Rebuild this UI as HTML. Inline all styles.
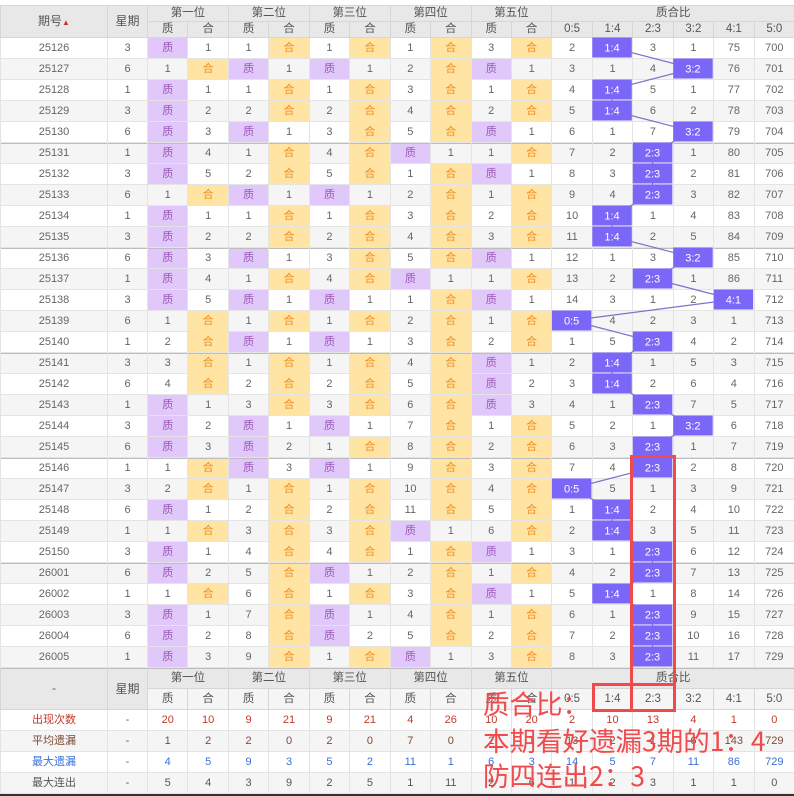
<!DOCTYPE html>
<html><head><meta charset="utf-8">
<style>
body{margin:0;background:#fff;width:794px;height:796px;overflow:hidden;position:relative;font-family:"Liberation Sans","Noto Sans CJK SC",sans-serif;}
table{position:absolute;left:0;top:5px;border-collapse:collapse;table-layout:fixed;width:794px;}
td{padding:0;border:1px solid #e4e4e4;text-align:center;font-size:11px;color:#666;height:20px;line-height:20px;white-space:nowrap;overflow:hidden;}
thead td,.fh td{background:#e8e8e8;color:#555;font-size:11.5px;border-color:#d6d6d6;}
tr.hr1 td{height:15px;line-height:15px;}
tr.hr2 td{height:15px;line-height:15px;}
tr.fr td{height:20px;line-height:20px;}
tbody tr:nth-child(even) td{background:#f5f5f5;}
td.q{background:#e0c8fb!important;color:#9b59b6;}
td.h{background:#ffe4a3!important;color:#f08c1e;}
tr.g td{box-shadow:inset 0 1px 0 #bdbdbd;}
tbody td:nth-child(2),tbody td:nth-child(3),tbody td:nth-child(5),tbody td:nth-child(7),tbody td:nth-child(9),tbody td:nth-child(11),tbody td:nth-child(13){border-left:1px solid #c4c4c4;}
.fh1 td{box-shadow:inset 0 1px 0 #bdbdbd;}
tr.r1 td{color:#c0392b;background:#fff;}
tr.r2 td{color:#7d4a36;background:#f5f5f5;}
tr.r3 td{color:#3a6fd8;background:#fff;}
tr.r4 td{color:#555;background:#f5f5f5;}
.ft td:nth-child(2),.ft td:nth-child(3),.ft td:nth-child(5),.ft td:nth-child(7),.ft td:nth-child(9),.ft td:nth-child(11),.ft td:nth-child(13){border-left:1px solid #c4c4c4;}
.ann{position:absolute;left:483px;color:#f04a4c;font-family:"Noto Sans CJK SC",sans-serif;font-size:26.5px;line-height:30px;white-space:nowrap;}
.rb{position:absolute;border:3px solid #f04a4c;box-sizing:border-box;}
</style></head><body>
<table>
<colgroup><col style="width:107px"><col style="width:40px"><col span="16" style="width:40.4375px"></colgroup>
<thead>
<tr class="hr1"><td rowspan="2" style="font-size:12px">期号<span style="color:#c33;font-size:8px">▲</span></td><td rowspan="2" style="font-size:12px">星期</td><td colspan="2">第一位</td><td colspan="2">第二位</td><td colspan="2">第三位</td><td colspan="2">第四位</td><td colspan="2">第五位</td><td colspan="6">质合比</td></tr>
<tr class="hr2"><td>质</td><td>合</td><td>质</td><td>合</td><td>质</td><td>合</td><td>质</td><td>合</td><td>质</td><td>合</td><td>0:5</td><td>1:4</td><td>2:3</td><td>3:2</td><td>4:1</td><td>5:0</td></tr>
</thead>
<tbody>
<tr><td>25126</td><td>3</td><td class="q">质</td><td>1</td><td>1</td><td class="h">合</td><td>1</td><td class="h">合</td><td>1</td><td class="h">合</td><td>3</td><td class="h">合</td><td>2</td><td></td><td>3</td><td>1</td><td>75</td><td>700</td></tr>
<tr><td>25127</td><td>6</td><td>1</td><td class="h">合</td><td class="q">质</td><td>1</td><td class="q">质</td><td>1</td><td>2</td><td class="h">合</td><td class="q">质</td><td>1</td><td>3</td><td>1</td><td>4</td><td></td><td>76</td><td>701</td></tr>
<tr><td>25128</td><td>1</td><td class="q">质</td><td>1</td><td>1</td><td class="h">合</td><td>1</td><td class="h">合</td><td>3</td><td class="h">合</td><td>1</td><td class="h">合</td><td>4</td><td></td><td>5</td><td>1</td><td>77</td><td>702</td></tr>
<tr><td>25129</td><td>3</td><td class="q">质</td><td>2</td><td>2</td><td class="h">合</td><td>2</td><td class="h">合</td><td>4</td><td class="h">合</td><td>2</td><td class="h">合</td><td>5</td><td></td><td>6</td><td>2</td><td>78</td><td>703</td></tr>
<tr><td>25130</td><td>6</td><td class="q">质</td><td>3</td><td class="q">质</td><td>1</td><td>3</td><td class="h">合</td><td>5</td><td class="h">合</td><td class="q">质</td><td>1</td><td>6</td><td>1</td><td>7</td><td></td><td>79</td><td>704</td></tr>
<tr class="g"><td>25131</td><td>1</td><td class="q">质</td><td>4</td><td>1</td><td class="h">合</td><td>4</td><td class="h">合</td><td class="q">质</td><td>1</td><td>1</td><td class="h">合</td><td>7</td><td>2</td><td></td><td>1</td><td>80</td><td>705</td></tr>
<tr><td>25132</td><td>3</td><td class="q">质</td><td>5</td><td>2</td><td class="h">合</td><td>5</td><td class="h">合</td><td>1</td><td class="h">合</td><td class="q">质</td><td>1</td><td>8</td><td>3</td><td></td><td>2</td><td>81</td><td>706</td></tr>
<tr><td>25133</td><td>6</td><td>1</td><td class="h">合</td><td class="q">质</td><td>1</td><td class="q">质</td><td>1</td><td>2</td><td class="h">合</td><td>1</td><td class="h">合</td><td>9</td><td>4</td><td></td><td>3</td><td>82</td><td>707</td></tr>
<tr><td>25134</td><td>1</td><td class="q">质</td><td>1</td><td>1</td><td class="h">合</td><td>1</td><td class="h">合</td><td>3</td><td class="h">合</td><td>2</td><td class="h">合</td><td>10</td><td></td><td>1</td><td>4</td><td>83</td><td>708</td></tr>
<tr><td>25135</td><td>3</td><td class="q">质</td><td>2</td><td>2</td><td class="h">合</td><td>2</td><td class="h">合</td><td>4</td><td class="h">合</td><td>3</td><td class="h">合</td><td>11</td><td></td><td>2</td><td>5</td><td>84</td><td>709</td></tr>
<tr class="g"><td>25136</td><td>6</td><td class="q">质</td><td>3</td><td class="q">质</td><td>1</td><td>3</td><td class="h">合</td><td>5</td><td class="h">合</td><td class="q">质</td><td>1</td><td>12</td><td>1</td><td>3</td><td></td><td>85</td><td>710</td></tr>
<tr><td>25137</td><td>1</td><td class="q">质</td><td>4</td><td>1</td><td class="h">合</td><td>4</td><td class="h">合</td><td class="q">质</td><td>1</td><td>1</td><td class="h">合</td><td>13</td><td>2</td><td></td><td>1</td><td>86</td><td>711</td></tr>
<tr><td>25138</td><td>3</td><td class="q">质</td><td>5</td><td class="q">质</td><td>1</td><td class="q">质</td><td>1</td><td>1</td><td class="h">合</td><td class="q">质</td><td>1</td><td>14</td><td>3</td><td>1</td><td>2</td><td></td><td>712</td></tr>
<tr><td>25139</td><td>6</td><td>1</td><td class="h">合</td><td>1</td><td class="h">合</td><td>1</td><td class="h">合</td><td>2</td><td class="h">合</td><td>1</td><td class="h">合</td><td></td><td>4</td><td>2</td><td>3</td><td>1</td><td>713</td></tr>
<tr><td>25140</td><td>1</td><td>2</td><td class="h">合</td><td class="q">质</td><td>1</td><td class="q">质</td><td>1</td><td>3</td><td class="h">合</td><td>2</td><td class="h">合</td><td>1</td><td>5</td><td></td><td>4</td><td>2</td><td>714</td></tr>
<tr class="g"><td>25141</td><td>3</td><td>3</td><td class="h">合</td><td>1</td><td class="h">合</td><td>1</td><td class="h">合</td><td>4</td><td class="h">合</td><td class="q">质</td><td>1</td><td>2</td><td></td><td>1</td><td>5</td><td>3</td><td>715</td></tr>
<tr><td>25142</td><td>6</td><td>4</td><td class="h">合</td><td>2</td><td class="h">合</td><td>2</td><td class="h">合</td><td>5</td><td class="h">合</td><td class="q">质</td><td>2</td><td>3</td><td></td><td>2</td><td>6</td><td>4</td><td>716</td></tr>
<tr><td>25143</td><td>1</td><td class="q">质</td><td>1</td><td>3</td><td class="h">合</td><td>3</td><td class="h">合</td><td>6</td><td class="h">合</td><td class="q">质</td><td>3</td><td>4</td><td>1</td><td></td><td>7</td><td>5</td><td>717</td></tr>
<tr><td>25144</td><td>3</td><td class="q">质</td><td>2</td><td class="q">质</td><td>1</td><td class="q">质</td><td>1</td><td>7</td><td class="h">合</td><td>1</td><td class="h">合</td><td>5</td><td>2</td><td>1</td><td></td><td>6</td><td>718</td></tr>
<tr><td>25145</td><td>6</td><td class="q">质</td><td>3</td><td class="q">质</td><td>2</td><td>1</td><td class="h">合</td><td>8</td><td class="h">合</td><td>2</td><td class="h">合</td><td>6</td><td>3</td><td></td><td>1</td><td>7</td><td>719</td></tr>
<tr class="g"><td>25146</td><td>1</td><td>1</td><td class="h">合</td><td class="q">质</td><td>3</td><td class="q">质</td><td>1</td><td>9</td><td class="h">合</td><td>3</td><td class="h">合</td><td>7</td><td>4</td><td></td><td>2</td><td>8</td><td>720</td></tr>
<tr><td>25147</td><td>3</td><td>2</td><td class="h">合</td><td>1</td><td class="h">合</td><td>1</td><td class="h">合</td><td>10</td><td class="h">合</td><td>4</td><td class="h">合</td><td></td><td>5</td><td>1</td><td>3</td><td>9</td><td>721</td></tr>
<tr><td>25148</td><td>6</td><td class="q">质</td><td>1</td><td>2</td><td class="h">合</td><td>2</td><td class="h">合</td><td>11</td><td class="h">合</td><td>5</td><td class="h">合</td><td>1</td><td></td><td>2</td><td>4</td><td>10</td><td>722</td></tr>
<tr><td>25149</td><td>1</td><td>1</td><td class="h">合</td><td>3</td><td class="h">合</td><td>3</td><td class="h">合</td><td class="q">质</td><td>1</td><td>6</td><td class="h">合</td><td>2</td><td></td><td>3</td><td>5</td><td>11</td><td>723</td></tr>
<tr><td>25150</td><td>3</td><td class="q">质</td><td>1</td><td>4</td><td class="h">合</td><td>4</td><td class="h">合</td><td>1</td><td class="h">合</td><td class="q">质</td><td>1</td><td>3</td><td>1</td><td></td><td>6</td><td>12</td><td>724</td></tr>
<tr class="g"><td>26001</td><td>6</td><td class="q">质</td><td>2</td><td>5</td><td class="h">合</td><td class="q">质</td><td>1</td><td>2</td><td class="h">合</td><td>1</td><td class="h">合</td><td>4</td><td>2</td><td></td><td>7</td><td>13</td><td>725</td></tr>
<tr><td>26002</td><td>1</td><td>1</td><td class="h">合</td><td>6</td><td class="h">合</td><td>1</td><td class="h">合</td><td>3</td><td class="h">合</td><td class="q">质</td><td>1</td><td>5</td><td></td><td>1</td><td>8</td><td>14</td><td>726</td></tr>
<tr><td>26003</td><td>3</td><td class="q">质</td><td>1</td><td>7</td><td class="h">合</td><td class="q">质</td><td>1</td><td>4</td><td class="h">合</td><td>1</td><td class="h">合</td><td>6</td><td>1</td><td></td><td>9</td><td>15</td><td>727</td></tr>
<tr><td>26004</td><td>6</td><td class="q">质</td><td>2</td><td>8</td><td class="h">合</td><td class="q">质</td><td>2</td><td>5</td><td class="h">合</td><td>2</td><td class="h">合</td><td>7</td><td>2</td><td></td><td>10</td><td>16</td><td>728</td></tr>
<tr><td>26005</td><td>1</td><td class="q">质</td><td>3</td><td>9</td><td class="h">合</td><td>1</td><td class="h">合</td><td class="q">质</td><td>1</td><td>3</td><td class="h">合</td><td>8</td><td>3</td><td></td><td>11</td><td>17</td><td>729</td></tr>
</tbody>
<tbody class="ft">
<tr class="fh fh1 fr"><td rowspan="2">-</td><td rowspan="2" style="font-size:12px">星期</td><td colspan="2">第一位</td><td colspan="2">第二位</td><td colspan="2">第三位</td><td colspan="2">第四位</td><td colspan="2">第五位</td><td colspan="6">质合比</td></tr>
<tr class="fh fr"><td>质</td><td>合</td><td>质</td><td>合</td><td>质</td><td>合</td><td>质</td><td>合</td><td>质</td><td>合</td><td>0:5</td><td>1:4</td><td>2:3</td><td>3:2</td><td>4:1</td><td>5:0</td></tr>
<tr class="r1 fr"><td>出现次数</td><td>-</td><td>20</td><td>10</td><td>9</td><td>21</td><td>9</td><td>21</td><td>4</td><td>26</td><td>10</td><td>20</td><td>2</td><td>10</td><td>13</td><td>4</td><td>1</td><td>0</td></tr>
<tr class="r2 fr"><td>平均遗漏</td><td>-</td><td>1</td><td>2</td><td>2</td><td>0</td><td>2</td><td>0</td><td>7</td><td>0</td><td>2</td><td>1</td><td>13</td><td>2</td><td>1</td><td>6</td><td>143</td><td>729</td></tr>
<tr class="r3 fr"><td>最大遗漏</td><td>-</td><td>4</td><td>5</td><td>9</td><td>3</td><td>5</td><td>2</td><td>11</td><td>1</td><td>6</td><td>3</td><td>14</td><td>5</td><td>7</td><td>11</td><td>86</td><td>729</td></tr>
<tr class="r4 fr"><td>最大连出</td><td>-</td><td>5</td><td>4</td><td>3</td><td>9</td><td>2</td><td>5</td><td>1</td><td>11</td><td>2</td><td>6</td><td>1</td><td>2</td><td>3</td><td>1</td><td>1</td><td>0</td></tr>
</tbody>
</table>

<svg width="794" height="796" style="position:absolute;left:0;top:0" font-family="Liberation Sans, sans-serif" font-size="11">
<polyline fill="none" stroke="#7d72cc" stroke-width="1.2" points="612,47.5 692.9,68.5 612,89.5 612,110.5 692.9,131.5 652.5,152.5 652.5,173.5 652.5,194.5 612,215.5 612,236.5 692.9,257.5 652.5,278.5 733.4,299.5 571.6,320.5 652.5,341.5 612,362.5 612,383.5 652.5,404.5 692.9,425.5 652.5,446.5 652.5,467.5 571.6,488.5 612,509.5 612,530.5 652.5,551.5 652.5,572.5 612,593.5 652.5,614.5 652.5,635.5 652.5,656.5"/>
<g fill="#7a66f7">
<rect x="592.3" y="37.5" width="39.5" height="20"/>
<rect x="673.2" y="58.5" width="39.5" height="20"/>
<rect x="592.3" y="79.5" width="39.5" height="20"/>
<rect x="592.3" y="100.5" width="39.5" height="20"/>
<rect x="673.2" y="121.5" width="39.5" height="20"/>
<rect x="632.8" y="142.5" width="39.5" height="20"/>
<rect x="632.8" y="163.5" width="39.5" height="20"/>
<rect x="632.8" y="184.5" width="39.5" height="20"/>
<rect x="592.3" y="205.5" width="39.5" height="20"/>
<rect x="592.3" y="226.5" width="39.5" height="20"/>
<rect x="673.2" y="247.5" width="39.5" height="20"/>
<rect x="632.8" y="268.5" width="39.5" height="20"/>
<rect x="713.7" y="289.5" width="39.5" height="20"/>
<rect x="551.9" y="310.5" width="39.5" height="20"/>
<rect x="632.8" y="331.5" width="39.5" height="20"/>
<rect x="592.3" y="352.5" width="39.5" height="20"/>
<rect x="592.3" y="373.5" width="39.5" height="20"/>
<rect x="632.8" y="394.5" width="39.5" height="20"/>
<rect x="673.2" y="415.5" width="39.5" height="20"/>
<rect x="632.8" y="436.5" width="39.5" height="20"/>
<rect x="632.8" y="457.5" width="39.5" height="20"/>
<rect x="551.9" y="478.5" width="39.5" height="20"/>
<rect x="592.3" y="499.5" width="39.5" height="20"/>
<rect x="592.3" y="520.5" width="39.5" height="20"/>
<rect x="632.8" y="541.5" width="39.5" height="20"/>
<rect x="632.8" y="562.5" width="39.5" height="20"/>
<rect x="592.3" y="583.5" width="39.5" height="20"/>
<rect x="632.8" y="604.5" width="39.5" height="20"/>
<rect x="632.8" y="625.5" width="39.5" height="20"/>
<rect x="632.8" y="646.5" width="39.5" height="20"/>
</g>
<g fill="#fff" text-anchor="middle">
<text x="612" y="51.5">1:4</text>
<text x="692.9" y="72.5">3:2</text>
<text x="612" y="93.5">1:4</text>
<text x="612" y="114.5">1:4</text>
<text x="692.9" y="135.5">3:2</text>
<text x="652.5" y="156.5">2:3</text>
<text x="652.5" y="177.5">2:3</text>
<text x="652.5" y="198.5">2:3</text>
<text x="612" y="219.5">1:4</text>
<text x="612" y="240.5">1:4</text>
<text x="692.9" y="261.5">3:2</text>
<text x="652.5" y="282.5">2:3</text>
<text x="733.4" y="303.5">4:1</text>
<text x="571.6" y="324.5">0:5</text>
<text x="652.5" y="345.5">2:3</text>
<text x="612" y="366.5">1:4</text>
<text x="612" y="387.5">1:4</text>
<text x="652.5" y="408.5">2:3</text>
<text x="692.9" y="429.5">3:2</text>
<text x="652.5" y="450.5">2:3</text>
<text x="652.5" y="471.5">2:3</text>
<text x="571.6" y="492.5">0:5</text>
<text x="612" y="513.5">1:4</text>
<text x="612" y="534.5">1:4</text>
<text x="652.5" y="555.5">2:3</text>
<text x="652.5" y="576.5">2:3</text>
<text x="612" y="597.5">1:4</text>
<text x="652.5" y="618.5">2:3</text>
<text x="652.5" y="639.5">2:3</text>
<text x="652.5" y="660.5">2:3</text>
</g>
</svg>

<div class="rb" style="left:630px;top:455px;width:46px;height:257px"></div>
<div class="rb" style="left:592px;top:683px;width:84px;height:29px"></div>
<div class="ann" style="top:688px">质合比：</div>
<div class="ann" style="top:725px">本期看好遗漏3期的1：4</div>
<div class="ann" style="top:760px">防四连出2：3</div>
<div style="position:absolute;left:0;top:794px;width:794px;height:2px;background:#333"></div>
</body></html>
